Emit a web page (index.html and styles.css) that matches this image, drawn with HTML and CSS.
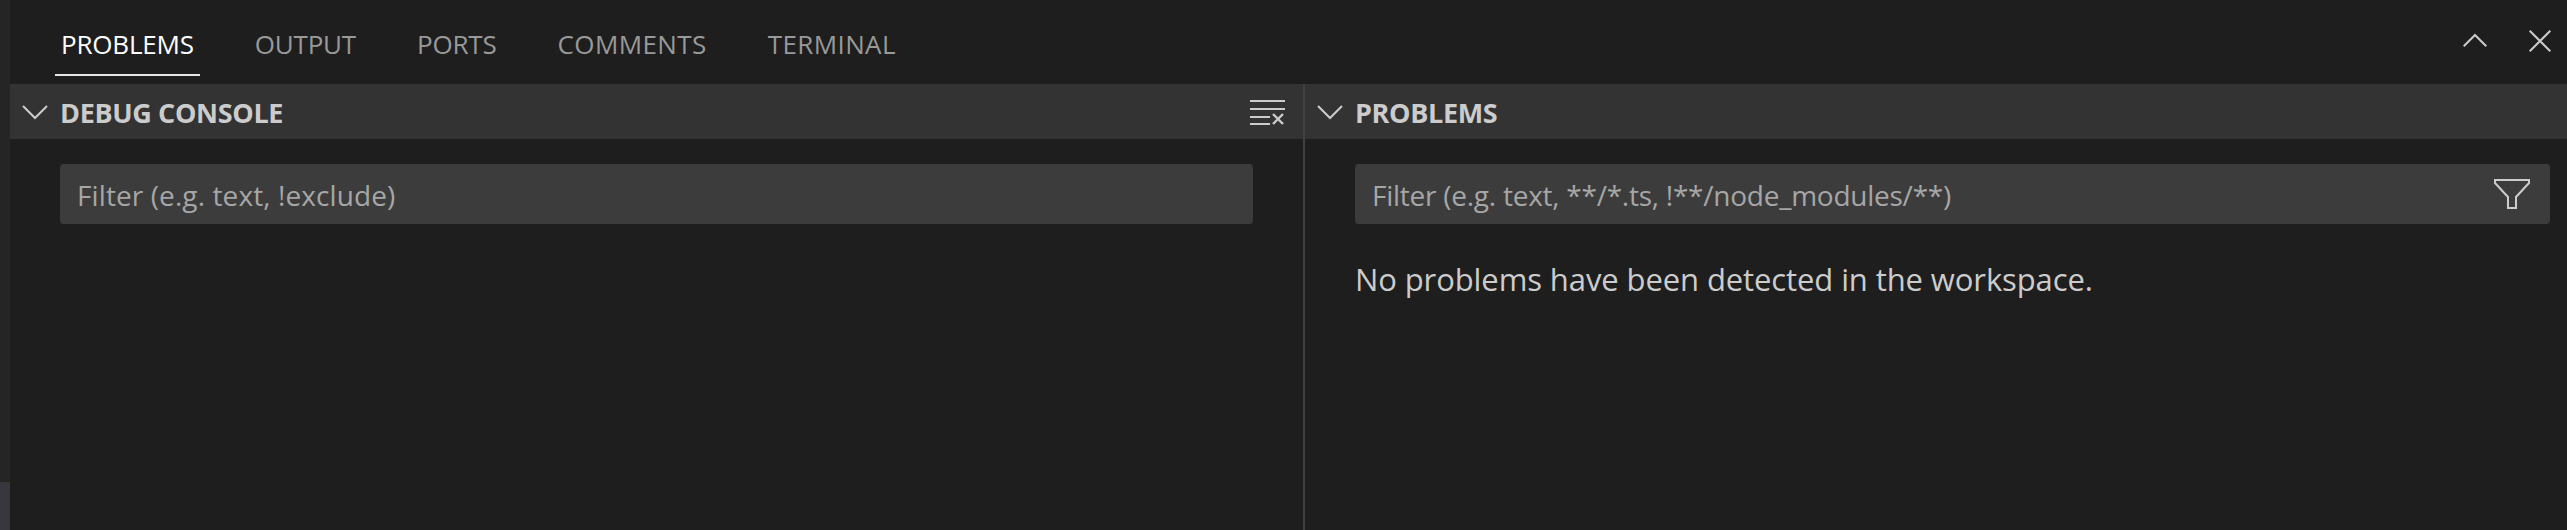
FILE: index.html
```html
<!DOCTYPE html>
<html lang="en">
<head>
<meta charset="utf-8">
<title>Panel</title>
<link rel="stylesheet" href="styles.css">
</head>
<body>
<div class="app">
  <aside class="strip"><div class="strip-end"></div></aside>
  <main class="panel">
    <header class="tabbar">
      <nav class="tabs">
        <span class="tab active">PROBLEMS</span>
        <span class="tab">OUTPUT</span>
        <span class="tab">PORTS</span>
        <span class="tab tab-wide">COMMENTS</span>
        <span class="tab tab-wide">TERMINAL</span>
      </nav>
      <div class="panel-actions">
        <svg class="icon-up" width="24" height="14" viewBox="0 0 24 14"><path d="M.7 13.3 12 2l11.3 11.3" fill="none" stroke="#ccc" stroke-width="2"/></svg>
        <svg class="icon-close" width="22" height="22" viewBox="0 0 22 22"><path d="M.7.7l20.6 20.6M21.3.7.7 21.3" fill="none" stroke="#ccc" stroke-width="2"/></svg>
      </div>
    </header>
    <div class="panes">
      <section class="pane pane-left">
        <div class="pane-head">
          <svg class="chevron" width="26" height="16" viewBox="0 0 26 16"><path d="M1 2l12 12L25 2" fill="none" stroke="#ccc" stroke-width="2"/></svg>
          <h2 class="pane-title">DEBUG CONSOLE</h2>
          <svg class="icon-clear" width="35" height="26" viewBox="0 0 35 26"><path d="M0 2h35M0 10h35M0 18h20M0 25h20" fill="none" stroke="#ccc" stroke-width="2"/><path d="M23 15l10 10M33 15 23 25" fill="none" stroke="#ccc" stroke-width="2.4"/></svg>
        </div>
        <div class="filter filter-left"><span class="placeholder">Filter (e.g. text, !exclude)</span></div>
      </section>
      <section class="pane pane-right">
        <div class="pane-head">
          <svg class="chevron" width="26" height="16" viewBox="0 0 26 16"><path d="M1 2l12 12L25 2" fill="none" stroke="#ccc" stroke-width="2"/></svg>
          <h2 class="pane-title">PROBLEMS</h2>
        </div>
        <div class="filter filter-right">
          <span class="placeholder placeholder-long">Filter (e.g. text, **/*.ts, !**/node_modules/**)</span>
          <svg class="icon-filter" width="36" height="30" viewBox="0 0 36 30"><path d="M1 1h34v3L22 18v11h-8V18L1 4z" fill="none" stroke="#ccc" stroke-width="2"/></svg>
        </div>
        <p class="message">No problems have been detected in the workspace.</p>
      </section>
    </div>
  </main>
</div>
</body>
</html>
```
FILE: styles.css
```css
* { box-sizing: border-box; }
html, body { margin: 0; height: 100%; background: #1e1e1e; overflow: hidden; }
body { font-family: "Open Sans", "Noto Sans", "Liberation Sans", sans-serif; color: #ccc; }
.app { display: flex; height: 530px; }
.strip { width: 10px; flex: none; background: #252526; display: flex; flex-direction: column; justify-content: flex-end; }
.strip-end { height: 48px; background: #37373d; }
.panel { flex: 1; min-width: 0; display: flex; flex-direction: column; }
.tabbar { height: 84px; display: flex; justify-content: space-between; padding: 0 0 0 45px; flex: none; }
.tabs { display: flex; gap: 49px; }
.tab { height: 76px; padding: 26px 6px 0; font-size: 26px; line-height: 36px; letter-spacing: -0.2px; color: #999; }
.tab-wide { letter-spacing: 0.4px; }
.tab.active { color: #fff; border-bottom: 2px solid #e7e7e7; }
.panel-actions { display: flex; align-items: flex-start; gap: 42px; padding: 33px 16px 0 0; }
.icon-close { margin-top: -3px; }
.panes { flex: 1; display: flex; min-height: 0; }
.pane { min-width: 0; }
.pane-left { width: 1295px; flex: none; border-right: 2px solid #414141; }
.pane-right { flex: 1; }
.pane-head { height: 55px; background: #333; display: flex; align-items: center; padding: 0 18px 0 12px; }
.chevron { flex: none; }
.pane-title { margin: 0 0 0 12px; padding-top: 2px; font-size: 27px; line-height: 36px; font-weight: 700; letter-spacing: -0.35px; color: #ccc; flex: 1; }
.icon-clear { flex: none; }
.filter { height: 60px; margin-top: 25px; background: #3c3c3c; border-radius: 4px; display: flex; align-items: center; justify-content: space-between; padding: 0 20px 0 17px; }
.filter-left { margin-left: 50px; margin-right: 50px; }
.filter-right { margin-left: 50px; margin-right: 17px; }
.placeholder { padding-top: 2px; font-size: 28px; line-height: 38px; letter-spacing: 0.1px; color: #a6a6a6; white-space: nowrap; }
.placeholder-long { letter-spacing: -0.25px; }
.message { margin: 34px 0 0 50px; font-size: 31px; line-height: 42px; letter-spacing: -0.1px; color: #ccc; white-space: nowrap; }
```
